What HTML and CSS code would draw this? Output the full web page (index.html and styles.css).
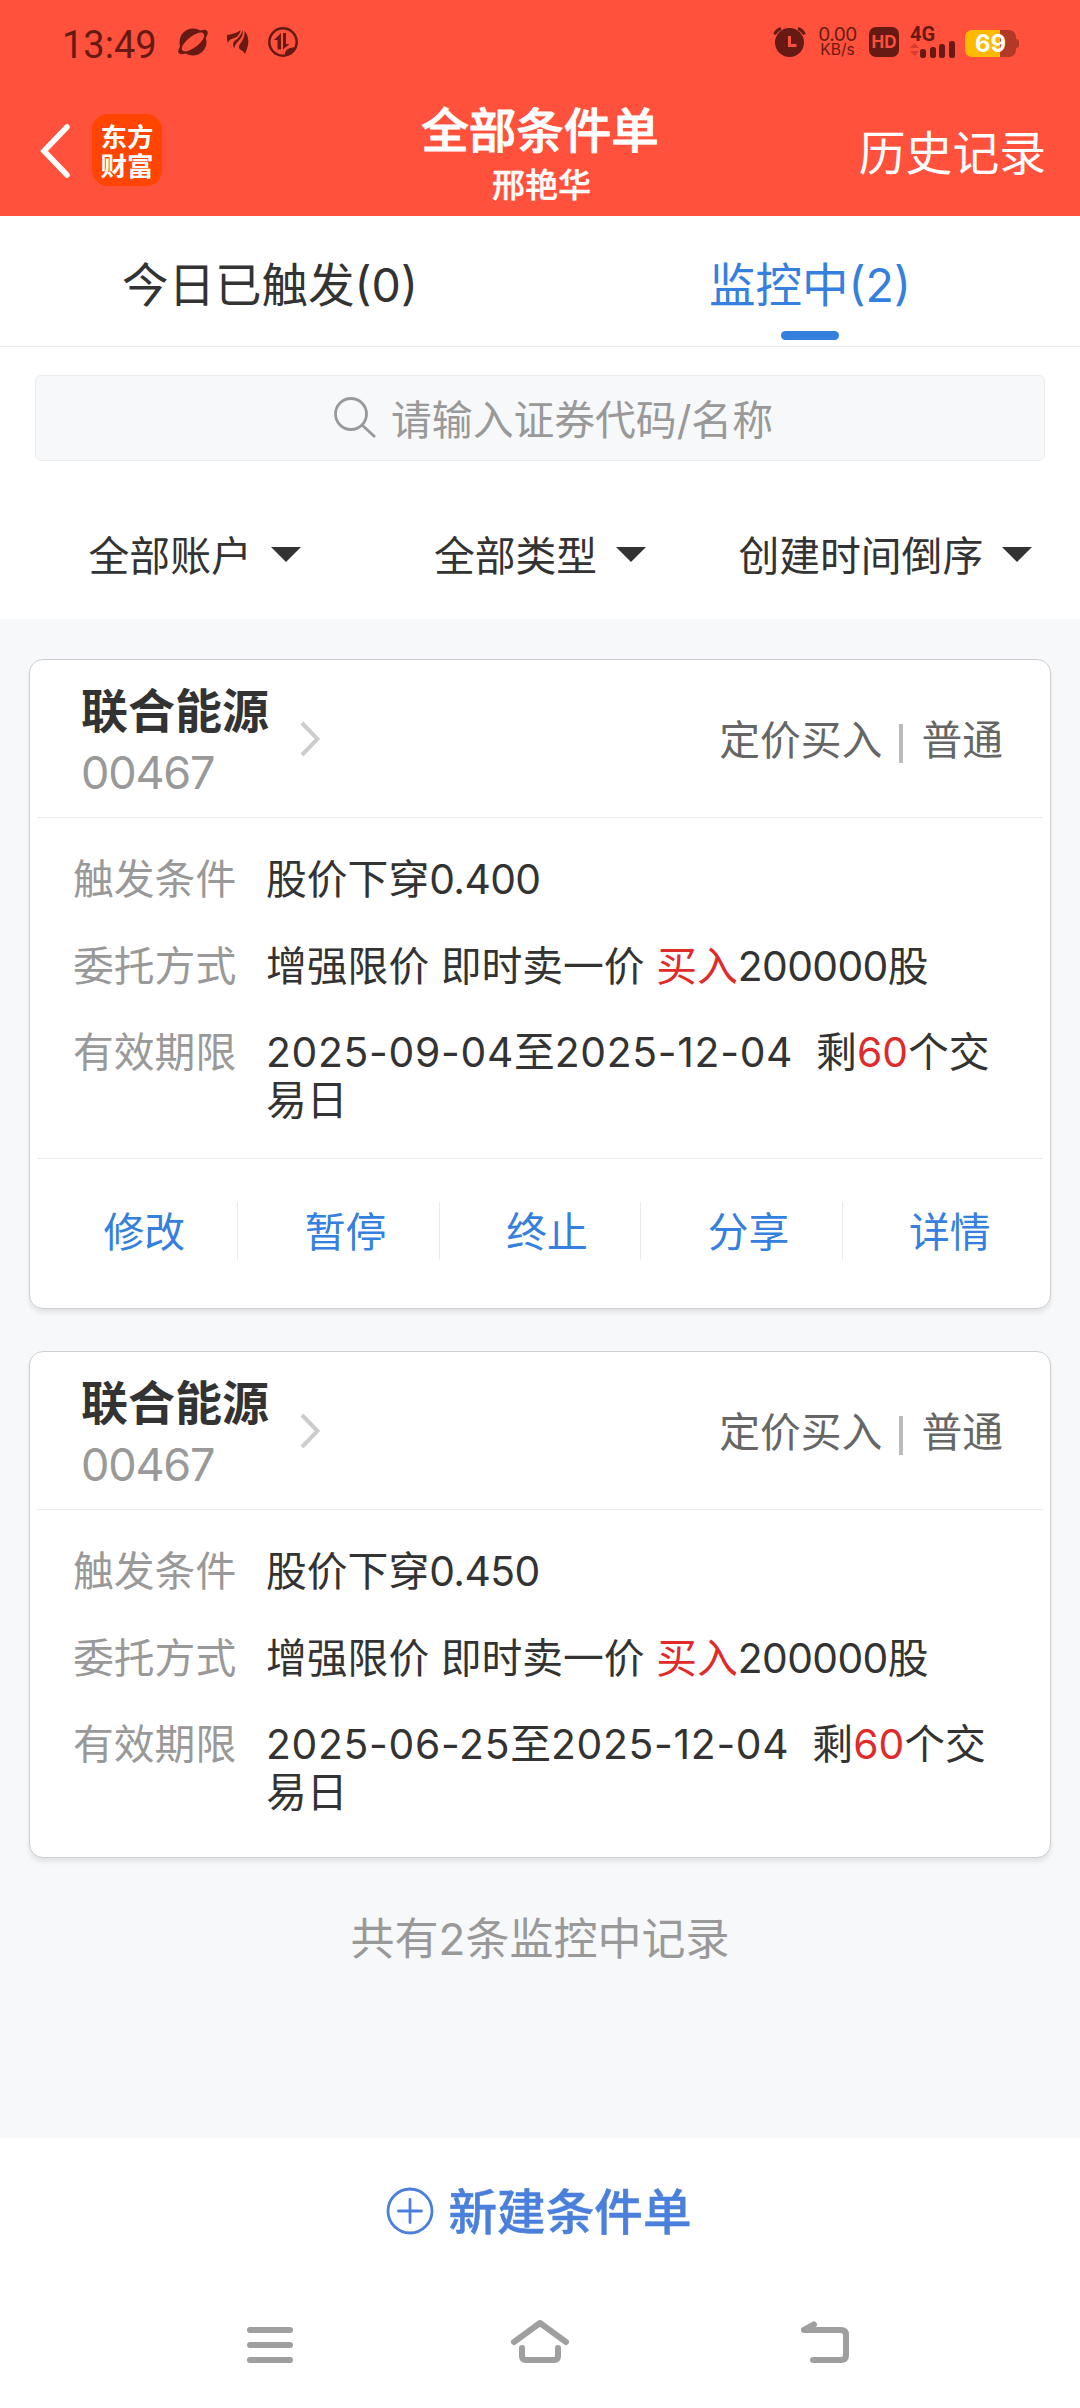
FILE: index.html
```html
<!DOCTYPE html>
<html lang="zh-CN">
<head>
    <meta charset="UTF-8">
    <meta name="viewport" content="width=device-width, initial-scale=1.0">
    <title>全部条件单</title>
    <link rel="stylesheet" href="styles.css">
</head>
<body>
    <header class="header">
        <div class="status-bar">
            <div class="status-left">
                <span class="time">13:49</span>
                <svg class="ico-planet" width="30" height="28" viewBox="0 0 30 28">
                    <circle cx="15" cy="14" r="13.500"/>
                    <ellipse cx="15" cy="14" rx="18" ry="6.500" transform="rotate(-38 15 14)"/>
                    <ellipse cx="15" cy="14" rx="13.500" ry="5.500" fill="#ff513b" transform="rotate(-38 15 14)"/>
                </svg>
                <svg class="ico-wing" width="22" height="25" viewBox="0 0 22 25">
                    <path d="M0 5C6 4 10 3 13.500 0c-.5 5-4 7.500-7.500 8.500-2 .5-4 1-5 4.500C0 11 0 8 0 5z"/>
                    <path d="M15.500 0c1 5-1 8-4 11-2 2-4 4-4 7-2-2-2-5 0-7 4-3 7-6 8-11z"/>
                    <path d="M17.500 1c5 6 5 13 .5 23-1-2-2-3-4-4-2-1-3-3-1-6 3-4 5-7 4.500-13z"/>
                </svg>
                <svg class="ico-data" width="30" height="30" viewBox="0 0 30 30">
                    <circle cx="15" cy="15" r="13.700" fill="none" stroke="#671a13" stroke-width="2.500"/>
                    <path d="M13 6v16.500H9.500V13H6zM15 6h3v11h3.500L15 22.500z"/>
                    <path d="M17 26c1-4 4-5 10-6-1 5-5 8-10 8z"/>
                </svg>
            </div>
            <div class="status-right">
                <svg width="33" height="30" viewBox="0 0 33 30">
                    <circle cx="16.500" cy="15.500" r="14.500"/>
                    <path d="M1.500 7.500Q3.500 3 8 1.500M31.500 7.500Q29.500 3 25 1.500" fill="none" stroke="#671a13" stroke-width="3"/>
                    <path d="M16.500 9v9.500h7" fill="none" stroke="#ff513b" stroke-width="3"/>
                </svg>
                <div class="speed">
                    <span class="speed-num">0.00</span>
                    <span class="speed-unit">KB/s</span>
                </div>
                <span class="hd">HD</span>
                <div class="signal">
                    <span class="signal-type">4G</span>
                    <svg width="46" height="17" viewBox="0 0 46 17">
                        <path d="M0 7l4.500-5L9 7zM0 10l4.500 5L9 10z" fill="#d93c2b"/>
                        <rect x="10" y="8" width="6" height="9" rx="2.500"/>
                        <rect x="20" y="6" width="6" height="11" rx="2.500"/>
                        <rect x="29" y="3" width="6" height="14" rx="2.500"/>
                        <rect x="39" y="0" width="6" height="17" rx="2.500"/>
                    </svg>
                </div>
                <div class="battery">69</div>
            </div>
        </div>
        <div class="title-bar">
            <div class="title-left">
                <svg width="30" height="54" viewBox="0 0 30 54">
                    <path d="M27 3L4 27l23 24" fill="none" stroke="#fff" stroke-width="5.500" stroke-linecap="round"/>
                </svg>
                <div class="logo">东方<br>财富</div>
            </div>
            <div class="title-center">
                <h1>全部条件单</h1>
                <p>邢艳华</p>
            </div>
            <a class="history">历史记录</a>
        </div>
    </header>

    <nav class="tabs">
        <a class="tab">今日已触发(0)</a>
        <a class="tab active">监控中(2)</a>
    </nav>

    <section class="toolbar">
        <div class="search">
            <svg width="42" height="42" viewBox="0 0 42 42" fill="none" stroke="#999" stroke-width="2.800">
                <circle cx="17" cy="17" r="15.500"/>
                <path d="M28 28l13 12"/>
            </svg>
            <span>请输入证券代码/名称</span>
        </div>
        <div class="filters">
            <div class="filter">全部账户<i class="arrow"></i></div>
            <div class="filter">全部类型<i class="arrow"></i></div>
            <div class="filter">创建时间倒序<i class="arrow"></i></div>
        </div>
    </section>

    <main class="list">
        <div class="card">
            <div class="card-head">
                <div class="stock">
                    <h2>联合能源</h2>
                    <span class="code">00467</span>
                </div>
                <svg class="chevron" width="20" height="36" viewBox="0 0 20 36">
                    <path d="M2 2l15.500 16L2 34" fill="none" stroke="#ccc" stroke-width="4"/>
                </svg>
                <div class="kind"><span>定价买入</span><i class="bar"></i><span>普通</span></div>
            </div>
            <dl class="info">
                <dt>触发条件</dt>
                <dd>股价下穿<span class="num">0.400</span></dd>
                <dt>委托方式</dt>
                <dd>增强限价 即时卖一价 <em>买入</em><span class="num">200000</span>股</dd>
                <dt>有效期限</dt>
                <dd><span class="date">2025-09-04</span>至<span class="date">2025-12-04</span>&nbsp; 剩<em>60</em>个交<br>易日</dd>
            </dl>
            <div class="actions">
                <a>修改</a>
                <a>暂停</a>
                <a>终止</a>
                <a>分享</a>
                <a>详情</a>
            </div>
        </div>

        <div class="card">
            <div class="card-head">
                <div class="stock">
                    <h2>联合能源</h2>
                    <span class="code">00467</span>
                </div>
                <svg class="chevron" width="20" height="36" viewBox="0 0 20 36">
                    <path d="M2 2l15.500 16L2 34" fill="none" stroke="#ccc" stroke-width="4"/>
                </svg>
                <div class="kind"><span>定价买入</span><i class="bar"></i><span>普通</span></div>
            </div>
            <dl class="info">
                <dt>触发条件</dt>
                <dd>股价下穿<span class="num">0.450</span></dd>
                <dt>委托方式</dt>
                <dd>增强限价 即时卖一价 <em>买入</em><span class="num">200000</span>股</dd>
                <dt>有效期限</dt>
                <dd><span class="date">2025-06-25</span>至<span class="date">2025-12-04</span>&nbsp; 剩<em>60</em>个交<br>易日</dd>
            </dl>
        </div>

        <p class="total">共有2条监控中记录</p>
    </main>

    <footer class="footer">
        <a class="create">
            <svg width="48" height="48" viewBox="0 0 48 48" fill="none" stroke="#4a80db" stroke-width="2.800">
                <circle cx="24" cy="24" r="22"/>
                <path d="M24 12.500v23M12.500 24h23" stroke-linecap="round"/>
            </svg>
            <span>新建条件单</span>
        </a>
        <div class="sys-nav">
            <svg width="60" height="46" viewBox="0 0 60 46">
                <path d="M10 10h40M10 25h40M10 40h40"/>
            </svg>
            <svg width="60" height="46" viewBox="0 0 60 46">
                <path d="M4 22L30 3l26 19M12 28v8q0 4 4 4h28q4 0 4-4v-8"/>
            </svg>
            <svg width="74" height="46" viewBox="0 0 74 46">
                <path d="M34 4.500L24 10h37q5 0 5 5v20q0 5-5 5H33"/>
            </svg>
        </div>
    </footer>
</body>
</html>
```
FILE: styles.css
```css
* {
    margin: 0;
    padding: 0;
    box-sizing: border-box;
}

body {
    font-family: Inter, "Noto Sans CJK SC", sans-serif;
    font-size: 40.8px;
    line-height: 48px;
    color: #333;
    background: #f6f8fa;
    width: 1080px;
    height: 2408px;
    display: flex;
    flex-direction: column;
    overflow: hidden;
}

h1, h2, p, dl {
    font-size: inherit;
    font-weight: normal;
}

i, em {
    font-style: normal;
}

svg {
    display: block;
    flex: none;
}

/* header */
.header {
    height: 216px;
    background: #ff513b;
    color: #fff;
}

.status-bar {
    height: 84px;
    padding: 0 61px 0 62px;
    display: flex;
    justify-content: space-between;
    align-items: center;
    color: #671a13;
    fill: #671a13;
}

.status-left,
.status-right {
    display: flex;
    align-items: center;
}

.time {
    font-family: Roboto, sans-serif;
    font-size: 38px;
    width: 116px;
    padding-top: 5px;
}

.ico-wing {
    margin-left: 19px;
}

.ico-data {
    margin-left: 19px;
}

.speed {
    width: 39px;
    margin-left: 12px;
    display: flex;
    flex-direction: column;
    align-items: center;
    line-height: 15px;
}

.speed-num {
    font-size: 19px;
    letter-spacing: -0.5px;
}

.speed-unit {
    font-size: 15.5px;
}

.hd {
    width: 30px;
    height: 30px;
    margin-left: 12px;
    border-radius: 7px;
    background: #671a13;
    color: #ff513b;
    font-size: 17px;
    font-weight: bold;
    line-height: 30px;
    text-align: center;
}

.signal {
    width: 46px;
    height: 31px;
    margin-left: 11px;
    display: flex;
    flex-direction: column;
    justify-content: space-between;
}

.signal-type {
    font-family: Roboto, sans-serif;
    font-size: 20px;
    font-weight: bold;
    line-height: 14px;
}

.battery {
    width: 51px;
    height: 27px;
    margin: 2px 3px 0 9px;
    border-radius: 7px;
    background: linear-gradient(90deg, #ffba00 69%, #b23828 69%);
    color: #fff;
    font-size: 24px;
    font-weight: bold;
    line-height: 28px;
    text-align: center;
    position: relative;
}

.battery::after {
    content: "";
    position: absolute;
    left: 51px;
    top: 9px;
    width: 3px;
    height: 9px;
    border-radius: 0 3px 3px 0;
    background: #b23828;
}

.title-bar {
    height: 132px;
    padding: 0 34px 0 40px;
    display: grid;
    grid-template-columns: 1fr auto 1fr;
}

.title-left {
    display: flex;
    align-items: center;
    gap: 22px;
    height: 132px;
    margin-top: 1px;
}

.logo {
    width: 70px;
    height: 72px;
    margin-top: -2px;
    padding-top: 7px;
    border-radius: 16px;
    background: #ff4500;
    font-family: "Noto Sans CJK SC", sans-serif;
    font-size: 26.5px;
    font-weight: bold;
    line-height: 29px;
    text-align: center;
}

.title-center {
    text-align: center;
    padding: 19px 6px 0 0;
}

.title-center h1 {
    font-size: 47.5px;
    font-weight: 500;
    line-height: 56px;
    -webkit-text-stroke: 0.9px #fff;
}

.title-center p {
    font-size: 33px;
    font-weight: 500;
    line-height: 52px;
    padding-left: 3px;
    -webkit-text-stroke: 0.4px #fff;
}

.history {
    justify-self: end;
    font-size: 46.8px;
    line-height: 138px;
}

/* tabs */
.tabs {
    height: 131px;
    display: flex;
    border-bottom: 1px solid #e8eaec;
    background: #fff;
}

.tab {
    flex: 1;
    font-size: 46.5px;
    line-height: 138px;
    text-align: center;
    position: relative;
}

.tab.active {
    color: #3580de;
}

.tab.active::after {
    content: "";
    position: absolute;
    left: 50%;
    bottom: 6px;
    width: 58px;
    height: 9px;
    margin-left: -29px;
    border-radius: 5px;
    background: #3580de;
}

/* search + filters */
.toolbar {
    height: 272px;
    padding: 28px 22px 0;
    background: #fff;
}

.search {
    height: 86px;
    margin: 0 13px;
    padding-left: 27px;
    border: 1px solid #e9ebed;
    border-radius: 6px;
    background: #f6f8fa;
    color: #999;
    display: flex;
    justify-content: center;
    align-items: center;
    gap: 15px;
}

.search span {
    padding-top: 3px;
}

.filters {
    display: flex;
    height: 158px;
    padding-top: 32px;
}

.filter {
    flex: 1;
    display: flex;
    justify-content: center;
    align-items: center;
    gap: 19px;
}

.arrow {
    margin-top: -3px;
    border: 15px solid transparent;
    border-top-color: #333;
    border-bottom: 0;
}

/* cards */
.list {
    flex: 1;
    padding: 40px 29px 0;
}

.card {
    min-height: 507px;
    padding: 0 7px;
    margin-bottom: 42px;
    border: 1px solid #cdcfd2;
    border-radius: 14px;
    background: #fff;
    box-shadow: 0 4px 4px rgba(0, 0, 0, 0.08);
}

.card-head {
    height: 158px;
    padding: 0 40px 0 44px;
    border-bottom: 1px solid #ebebeb;
    display: flex;
    align-items: center;
}

.stock {
    width: 219px;
    padding-top: 7px;
}

.stock h2 {
    font-size: 47px;
    font-weight: bold;
    line-height: 62px;
}

.code {
    display: block;
    font-size: 45px;
    line-height: 62px;
    letter-spacing: -1.2px;
    color: #999;
}

.kind {
    margin-left: auto;
    padding-top: 2px;
    display: flex;
    align-items: center;
    color: #666;
}

.bar {
    width: 4px;
    height: 39px;
    margin: 8px 18px 0 17px;
    background: #bbb;
}

.info {
    display: grid;
    grid-template-columns: 193px 1fr;
    row-gap: 38.500px;
    padding: 37px 36px 34px;
}

.info dt {
    color: #999;
}

.info em {
    color: #e02b2b;
}

.num {
    letter-spacing: -0.6px;
}

.date {
    letter-spacing: 0.7px;
}

.actions {
    height: 150px;
    padding-top: 43px;
    border-top: 1px solid #ebebeb;
    display: flex;
}

.actions a {
    flex: 1;
    height: 58px;
    padding-left: 14px;
    border-right: 1px solid #ebebeb;
    color: #3580de;
    line-height: 60px;
    text-align: center;
}

.actions a:last-child {
    border-right: 0;
}

.total {
    font-size: 44px;
    color: #999;
    text-align: center;
    padding-top: 15px;
}

/* bottom */
.footer {
    height: 270px;
    background: #fff;
}

.create {
    height: 146px;
    padding-right: 3px;
    display: flex;
    justify-content: center;
    align-items: center;
    gap: 15px;
    color: #4a80db;
    font-size: 48.600px;
    font-weight: 500;
    -webkit-text-stroke: 0.5px #4a80db;
}

.create span {
    padding-top: 4px;
}

.sys-nav {
    display: flex;
    justify-content: center;
    gap: 210px;
    padding: 36px 0 0 14px;
    fill: none;
    stroke: #9f9f9f;
    stroke-width: 6;
    stroke-linecap: round;
    stroke-linejoin: round;
}
```
